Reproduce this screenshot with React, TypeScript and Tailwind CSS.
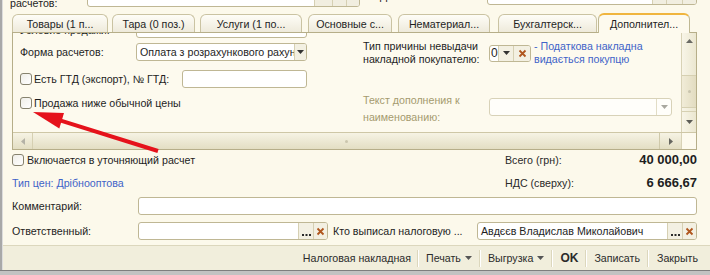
import React from 'react';

const tabs = [
    { label: 'Товары (1 п...', cls: 'w-[96px]' },
    { label: 'Тара (0 поз.)', cls: 'w-[83px] ml-[4px]' },
    { label: 'Услуги (1 по...', cls: 'w-[102px] ml-[5px]' },
    { label: 'Основные с...', cls: 'w-[84px] ml-[6px]' },
    { label: 'Нематериал...', cls: 'w-[92px] ml-[6px]' },
    { label: 'Бухгалтерск...', cls: 'w-[99px] ml-[8px]' },
    { label: 'Дополнител...', cls: 'w-[92px] ml-[1px]', active: true },
];

const Cross = () => (
    <svg width="9" height="9" viewBox="0 0 9 9">
        <path d="M1.5 1.5L7.5 7.5M7.5 1.5L1.5 7.5" stroke="#b0561e" strokeWidth="1.8" />
    </svg>
);

const Dots = () => (
    <svg width="9" height="2" viewBox="0 0 9 2">
        <rect x="0" y="0" width="2" height="2" fill="#2a2a2a" />
        <rect x="3.5" y="0" width="2" height="2" fill="#2a2a2a" />
        <rect x="7" y="0" width="2" height="2" fill="#2a2a2a" />
    </svg>
);

const Tri = ({ dir, color }: { dir: 'down' | 'up' | 'left' | 'right'; color: string }) => {
    const d = {
        down: 'M0 0h7L3.5 4z',
        up: 'M0 4h7L3.5 0z',
        left: 'M4 0v7L0 3.5z',
        right: 'M0 0v7L4 3.5z',
    }[dir];
    const vert = dir === 'down' || dir === 'up';
    return (
        <svg width={vert ? 7 : 4} height={vert ? 4 : 7} viewBox={vert ? '0 0 7 4' : '0 0 4 7'}>
            <path d={d} fill={color} />
        </svg>
    );
};

const CheckBox = () => (
    <div className="w-[12px] h-[12px] shrink-0 rounded-[3px] border border-[#86826e] bg-gradient-to-br from-[#efeee8] to-white" />
);

// input with "..." and clear buttons
const RefField = ({ w, value }: { w: string; value?: string }) => (
    <div className={`flex h-[18px] shrink-0 rounded-[3px] border border-[#bfb794] bg-white overflow-hidden ${w}`}>
        <div className="flex-1 px-[3px] leading-[16px] whitespace-nowrap overflow-hidden">{value}</div>
        <div className="w-[15px] border-l border-[#d6d0b3] bg-[#f3f0e2] flex items-end justify-center pb-[3px]">
            <Dots />
        </div>
        <div className="w-[14px] border-l border-[#d6d0b3] bg-[#f3f0e2] flex items-center justify-center">
            <Cross />
        </div>
    </div>
);

const Sep = () => <div className="w-px h-[17px] bg-[#dcd7bd] border-r border-white box-content" />;

export default function App() {
    return (
        <div className="relative w-[710px] h-[275px] overflow-hidden bg-[#fcf9eb] text-[10.67px] leading-[14px] text-[#1e1e1e] font-['Liberation_Sans',Arial,sans-serif] flex flex-col">
            <div className="flex flex-1 min-h-0">
                {/* window frame */}
                <div className="w-[3px] shrink-0 bg-[#a8a8a8] border-r border-[#dcdcdc]" />

                <div className="flex-1 flex flex-col min-w-0">
                    {/* clipped top row */}
                    <div className="h-[13px] shrink-0 overflow-hidden flex">
                        <span className="ml-[7px] -mt-[4px] w-[77px] shrink-0">расчетов:</span>
                        <div className="-mt-[13px] w-[273px] h-[20px] shrink-0 flex rounded-[3px] border border-[#bfb794] bg-white overflow-hidden">
                            <div className="flex-1" />
                            <div className="w-[18px] border-l border-[#d6d0b3] bg-[#f1eee0]" />
                            <div className="w-[14px] border-l border-[#d6d0b3] bg-[#f1eee0]" />
                            <div className="w-[13px] border-l border-[#d6d0b3] bg-[#f1eee0]" />
                        </div>
                        <span className="ml-[20px] -mt-[11px] w-[107px] shrink-0">Дата основания:</span>
                        <div className="-mt-[15px] w-[210px] h-[20px] shrink-0 flex rounded-[3px] border border-[#bfb794] bg-white overflow-hidden">
                            <div className="flex-1" />
                            <div className="w-[14px] border-l border-[#d6d0b3] bg-[#f1eee0]" />
                            <div className="w-[16px] border-l border-[#d6d0b3] bg-[#f1eee0]" />
                            <div className="w-[14px] border-l border-[#d6d0b3] bg-[#f1eee0]" />
                        </div>
                    </div>

                    {/* tabs */}
                    <div className="h-[19px] shrink-0 flex items-end pl-[9px]">
                        {tabs.map((t) =>
                            t.active ? (
                                <div
                                    key={t.label}
                                    className={`${t.cls} h-[20px] -mb-px relative z-10 shrink-0 flex items-center justify-center rounded-t-[6px] border border-b-0 border-[#bfb893] border-t-2 border-t-[#f0b53e] bg-[#fdfaee]`}
                                >
                                    {t.label}
                                </div>
                            ) : (
                                <div
                                    key={t.label}
                                    className={`${t.cls} h-[18px] shrink-0 flex items-center justify-center rounded-t-[6px] border border-b-0 border-[#cac3a2] bg-gradient-to-b from-[#fefdf7] to-[#eeeadb]`}
                                >
                                    {t.label}
                                </div>
                            )
                        )}
                    </div>

                    {/* tab panel */}
                    <div className="ml-[9px] mr-[13px] h-[118px] shrink-0 border border-[#b6ae89] bg-[#fdfaee] flex flex-col">
                        <div className="flex flex-1 min-h-0">
                            <div className="flex-1 overflow-hidden flex pl-[7px]">
                                {/* left column */}
                                <div className="w-[287px] shrink-0 flex flex-col">
                                    <div className="h-[5px] overflow-hidden flex items-end">
                                        <span className="w-[116px] shrink-0 mb-px whitespace-nowrap">Условие продажи:</span>
                                        <div className="w-[171px] h-[18px] shrink-0 rounded-[3px] border border-[#bfb794] bg-white" />
                                    </div>
                                    <div className="mt-[5px] h-[18px] flex items-center">
                                        <span className="w-[116px] shrink-0">Форма расчетов:</span>
                                        <div className="w-[171px] h-[18px] flex rounded-[3px] border border-[#bfb794] bg-white overflow-hidden">
                                            <div className="flex-1 pl-[3px] leading-[16px] whitespace-nowrap overflow-hidden">
                                                Оплата з розрахункового рахунку
                                            </div>
                                            <div className="w-[12px] border-l border-[#d6d0b3] bg-[#f3f0e2] flex items-center justify-center">
                                                <Tri dir="down" color="#333" />
                                            </div>
                                        </div>
                                    </div>
                                    <div className="mt-[9px] h-[18px] flex items-center">
                                        <CheckBox />
                                        <span className="ml-[2px] whitespace-nowrap">Есть ГТД (экспорт), № ГТД:</span>
                                        <div className="ml-auto w-[125px] h-[18px] rounded-[3px] border border-[#bfb794] bg-white" />
                                    </div>
                                    <div className="mt-[8px] h-[14px] flex items-center">
                                        <CheckBox />
                                        <span className="ml-[2px] whitespace-nowrap">Продажа ниже обычной цены</span>
                                    </div>
                                </div>

                                {/* right column */}
                                <div className="ml-[56px] flex flex-col">
                                    <div className="mt-[7px] h-[26px] flex items-center">
                                        <div className="w-[126px] shrink-0 leading-[13px]">
                                            Тип причины невыдачи
                                            <br />
                                            накладной покупателю:
                                        </div>
                                        <div className="w-[42px] h-[17px] shrink-0 flex rounded-[3px] border border-[#bfb794] bg-white overflow-hidden">
                                            <div className="w-[8px] pl-[1px] leading-[15px] text-[12px]">0</div>
                                            <div className="w-[15px] border-l border-[#d6d0b3] bg-[#f3f0e2] flex items-center justify-center">
                                                <Tri dir="down" color="#333" />
                                            </div>
                                            <div className="flex-1 border-l border-[#d6d0b3] bg-[#f3f0e2] flex items-center justify-center">
                                                <Cross />
                                            </div>
                                        </div>
                                        <div className="ml-[3px] leading-[13px] text-[#3f63c8] whitespace-nowrap">
                                            - Податкова накладна
                                            <br />
                                            видається покупцю
                                        </div>
                                    </div>
                                    <div className="mt-[26px] flex items-start">
                                        <div className="w-[126px] shrink-0 leading-[17px] text-[#a59b6f]">
                                            Текст дополнения к
                                            <br />
                                            наименованию:
                                        </div>
                                        <div className="mt-[6px] w-[183px] h-[18px] flex rounded-[3px] border border-[#d8d2b8] bg-[#fffefa] overflow-hidden">
                                            <div className="flex-1" />
                                            <div className="w-[15px] border-l border-[#e2ddc6] flex items-center justify-center">
                                                <Tri dir="down" color="#a9a89f" />
                                            </div>
                                        </div>
                                    </div>
                                </div>
                            </div>

                            {/* vertical scrollbar */}
                            <div className="w-[15px] shrink-0 border-l border-[#d8d2b6] flex flex-col bg-gradient-to-r from-[#f8f5e8] to-[#ebe7d0]">
                                <div className="h-[15px] flex items-center justify-center">
                                    <Tri dir="up" color="#6a6a64" />
                                </div>
                                <div className="h-[27px]" />
                                <div className="h-[33px] border-y border-[#d6d0b2] bg-gradient-to-r from-[#f1ecd8] to-[#e2dcc0] flex items-center justify-center">
                                    <div className="w-[3px] h-[3px] rounded-full bg-[#c9c4ad]" />
                                </div>
                                <div className="h-[3px]" />
                                <div className="flex-1 border-t border-[#d6d0b2] flex items-center justify-center">
                                    <Tri dir="down" color="#5c5c56" />
                                </div>
                            </div>
                        </div>

                        {/* horizontal scrollbar */}
                        <div className="h-[17px] shrink-0 border-t border-[#cec7a6] flex bg-gradient-to-b from-[#f6f3e4] to-[#e3dec3]">
                            <div className="w-[20px] flex items-center justify-center border-r border-[#d6d0b2]">
                                <Tri dir="left" color="#b4b2a6" />
                            </div>
                            <div className="flex-1 flex items-center justify-center">
                                <div className="w-[3px] h-[3px] rounded-full bg-[#cbc6ae]" />
                            </div>
                            <div className="w-[22px] flex items-center justify-center border-l border-[#cfc9aa]">
                                <Tri dir="right" color="#66665f" />
                            </div>
                            <div className="w-[15px] bg-[#fdfaee] border-l border-[#d8d2b6]" />
                        </div>
                    </div>

                    {/* lower form */}
                    <div className="mt-[3px] pl-[9px] pr-[13px] h-[14px] flex items-center">
                        <CheckBox />
                        <span className="ml-[3px] whitespace-nowrap">Включается в уточняющий расчет</span>
                        <div className="ml-auto w-[192px] flex items-baseline justify-between">
                            <span className="text-[#2a2a2a]">Всего (грн):</span>
                            <span className="font-bold text-[13px]">40 000,00</span>
                        </div>
                    </div>
                    <div className="mt-[9px] pl-[9px] pr-[13px] h-[14px] flex items-center">
                        <span className="text-[#3f63c8]">Тип цен: Дрібнооптова</span>
                        <div className="ml-auto w-[192px] flex items-baseline justify-between">
                            <span className="text-[#2a2a2a]">НДС (сверху):</span>
                            <span className="font-bold text-[13px]">6 666,67</span>
                        </div>
                    </div>
                    <div className="mt-[7px] pl-[9px] pr-[13px] h-[18px] flex items-center">
                        <span className="w-[126px] shrink-0">Комментарий:</span>
                        <div className="flex-1 h-[18px] rounded-[3px] border border-[#bfb794] bg-white" />
                    </div>
                    <div className="mt-[7px] pl-[9px] pr-[13px] h-[18px] flex items-center">
                        <span className="w-[126px] shrink-0">Ответственный:</span>
                        <RefField w="w-[190px]" />
                        <span className="ml-[5px] w-[144px] shrink-0 whitespace-nowrap">Кто выписал налоговую ...</span>
                        <RefField w="w-[220px]" value="Авдєєв Владислав Миколайович" />
                    </div>

                    {/* command bar */}
                    <div className="mt-[5px] h-[25px] shrink-0 border-t border-[#dcd7bd] bg-[#f1eedc] flex items-center justify-end pr-[5px] text-[#2b2b2b]">
                        <span className="px-[6px]">Налоговая накладная</span>
                        <Sep />
                        <span className="px-[7px] flex items-center gap-[4px]">
                            Печать <Tri dir="down" color="#555" />
                        </span>
                        <Sep />
                        <span className="px-[7px] flex items-center gap-[4px]">
                            Выгрузка <Tri dir="down" color="#555" />
                        </span>
                        <Sep />
                        <span className="px-[7px] font-bold text-[12px]">OK</span>
                        <Sep />
                        <span className="px-[7px]">Записать</span>
                        <Sep />
                        <span className="pl-[8px] pr-[7px]">Закрыть</span>
                    </div>
                </div>
            </div>

            {/* bottom frame */}
            <div className="h-[5px] shrink-0 bg-[#c2c2c2] border-t border-[#7e7e7e]" />

            {/* red annotation arrow */}
            <svg className="absolute left-0 top-0 pointer-events-none" width="710" height="275">
                <line x1="158" y1="151" x2="60" y2="120.3" stroke="#e5121b" strokeWidth="4" />
                <polygon points="33,112 64,113.1 59.3,128.4" fill="#e5121b" />
            </svg>
        </div>
    );
}
